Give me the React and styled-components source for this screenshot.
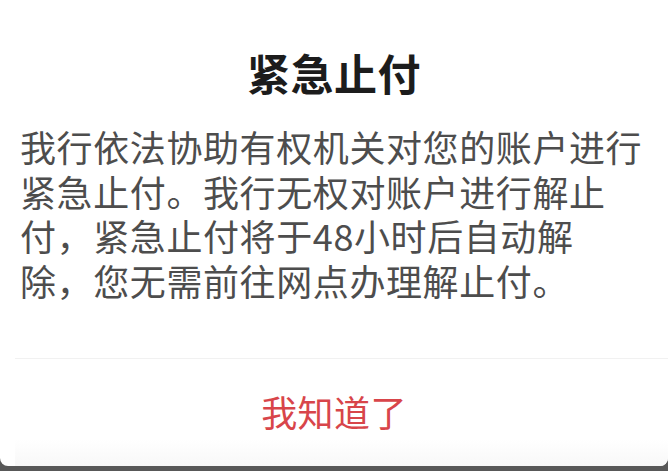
import React from "react";
import styled, { createGlobalStyle } from "styled-components";

const Global = createGlobalStyle`
  html, body { margin: 0; padding: 0; background: #585858; }
  body { font-family: "Noto Sans CJK SC", "Noto Sans", sans-serif; }
  * { box-sizing: border-box; }
`;

const Card = styled.div`
  width: 668px;
  height: 466px;
  background: #ffffff;
  border-radius: 0 0 8px 8px;
  display: flex;
  flex-direction: column;
  overflow: hidden;
`;

const Title = styled.h1`
  margin: 0;
  padding-top: 51px;
  font-size: 43px;
  line-height: 43px;
  font-weight: 700;
  letter-spacing: 0.5px;
  color: #1c1c1c;
  text-align: center;
`;

const Message = styled.p`
  margin: 30px 0 0;
  padding: 0 16px 0 20px;
  font-size: 36px;
  line-height: 44.5px;
  letter-spacing: 0.6px;
  color: #4d4d4d;
  white-space: nowrap;
`;

const Footer = styled.div`
  margin-top: auto;
  height: 108px;
  border-top: 1px solid #f1f1f1;
  margin-left: 15px;
  display: flex;
  align-items: center;
  justify-content: center;
  background: linear-gradient(#ffffff 75%, #f8f8f8);
`;

const ActionButton = styled.button`
  border: none;
  background: transparent;
  padding: 0;
  margin: -3px 0 0 -15px;
  font-family: inherit;
  font-size: 36px;
  line-height: 36px;
  letter-spacing: 0.4px;
  color: #d8454a;
  cursor: pointer;
`;

export default function App() {
  return (
    <>
      <Global />
      <Card>
        <Title>紧急止付</Title>
        <Message>
          我行依法协助有权机关对您的账户进行
          <br />
          紧急止付。我行无权对账户进行解止
          <br />
          付，紧急止付将于48小时后自动解
          <br />
          除，您无需前往网点办理解止付。
        </Message>
        <Footer>
          <ActionButton>我知道了</ActionButton>
        </Footer>
      </Card>
    </>
  );
}
